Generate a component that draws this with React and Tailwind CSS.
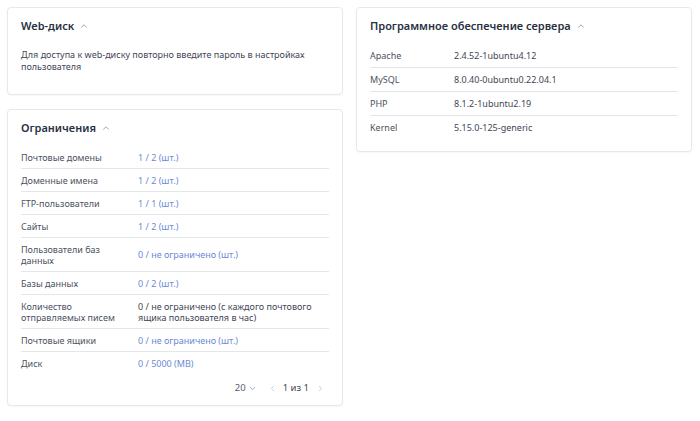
import React from 'react';
import { ChevronUp, ChevronDown, ChevronLeft, ChevronRight } from 'lucide-react';

const limits = [
  ['Почтовые домены', '1 / 2 (шт.)', true],
  ['Доменные имена', '1 / 2 (шт.)', true],
  ['FTP-пользователи', '1 / 1 (шт.)', true],
  ['Сайты', '1 / 2 (шт.)', true],
  ['Пользователи баз данных', '0 / не ограничено (шт.)', true],
  ['Базы данных', '0 / 2 (шт.)', true],
  ['Количество отправляемых писем', '0 / не ограничено (с каждого почтового ящика пользователя в час)', false],
  ['Почтовые ящики', '0 / не ограничено (шт.)', true],
  ['Диск', '0 / 5000 (MB)', true],
];

const software = [
  ['Apache', '2.4.52-1ubuntu4.12'],
  ['MySQL', '8.0.40-0ubuntu0.22.04.1'],
  ['PHP', '8.1.2-1ubuntu2.19'],
  ['Kernel', '5.15.0-125-generic'],
];

function Card({ title, children, className = '' }) {
  return (
    <div className={`bg-white border border-[#e6e8ec] rounded-[4px] shadow-[0_1px_2px_rgba(0,0,0,0.04)] px-[13px] ${className}`}>
      <div className="flex items-center gap-[5px] pt-[10px] pb-[10px]">
        <h2 className="text-[11px] font-semibold text-[#283142] leading-[16px]">{title}</h2>
        <ChevronUp className="w-[10px] h-[10px] text-[#8c94a3]" strokeWidth={2} />
      </div>
      {children}
    </div>
  );
}

export default function App() {
  return (
    <div className="w-[700px] h-[421px] bg-white p-[7px] flex items-start gap-[13px] text-[9px] leading-[11px]" style={{ fontFamily: '"Noto Sans", "Open Sans", sans-serif' }}>
      <div className="w-[336px] flex flex-col gap-[14px]">
        <Card title="Web-диск" className="h-[88px]">
          <p className="text-[#3f4654] pt-[5px] leading-[12px]">
            Для доступа к web-диску повторно введите пароль в настройках пользователя
          </p>
        </Card>
        <Card title="Ограничения" className="h-[297px]">
          <div className="flex flex-col">
            {limits.map(([label, value, blue], i) => (
              <div
                key={label}
                className={`flex items-center py-[5.5px] ${i < limits.length - 1 ? 'border-b border-[#e4e6ea]' : ''}`}
              >
                <div className="w-[117px] shrink-0 text-[#4b5260] pr-2">{label}</div>
                <div className={blue ? 'text-[#6b8ad8]' : 'text-[#3f4654]'}>{value}</div>
              </div>
            ))}
          </div>
          <div className="flex items-center justify-end pt-[8px] pr-[4px] leading-[12px] text-[#3f4654]">
            <span className="text-[#5a6170] text-[9.5px]">20</span>
            <ChevronDown className="w-[9px] h-[9px] text-[#6b8ad8] ml-[2px]" strokeWidth={2} />
            <ChevronLeft className="w-[9px] h-[9px] text-[#b8bdc6] ml-[11px]" strokeWidth={2} />
            <span className="ml-[6px] mr-[7px] text-[9.5px]">1 из 1</span>
            <ChevronRight className="w-[9px] h-[9px] text-[#b8bdc6]" strokeWidth={2} />
          </div>
        </Card>
      </div>
      <div className="w-[336px]">
        <Card title="Программное обеспечение сервера" className="h-[145px]">
          <div className="flex flex-col">
            {software.map(([label, value], i) => (
              <div
                key={label}
                className={`flex items-center py-[6px] ${i < software.length - 1 ? 'border-b border-[#e4e6ea]' : ''}`}
              >
                <div className="w-[84px] shrink-0 text-[#4b5260]">{label}</div>
                <div className="text-[#3f4654]">{value}</div>
              </div>
            ))}
          </div>
        </Card>
      </div>
    </div>
  );
}
